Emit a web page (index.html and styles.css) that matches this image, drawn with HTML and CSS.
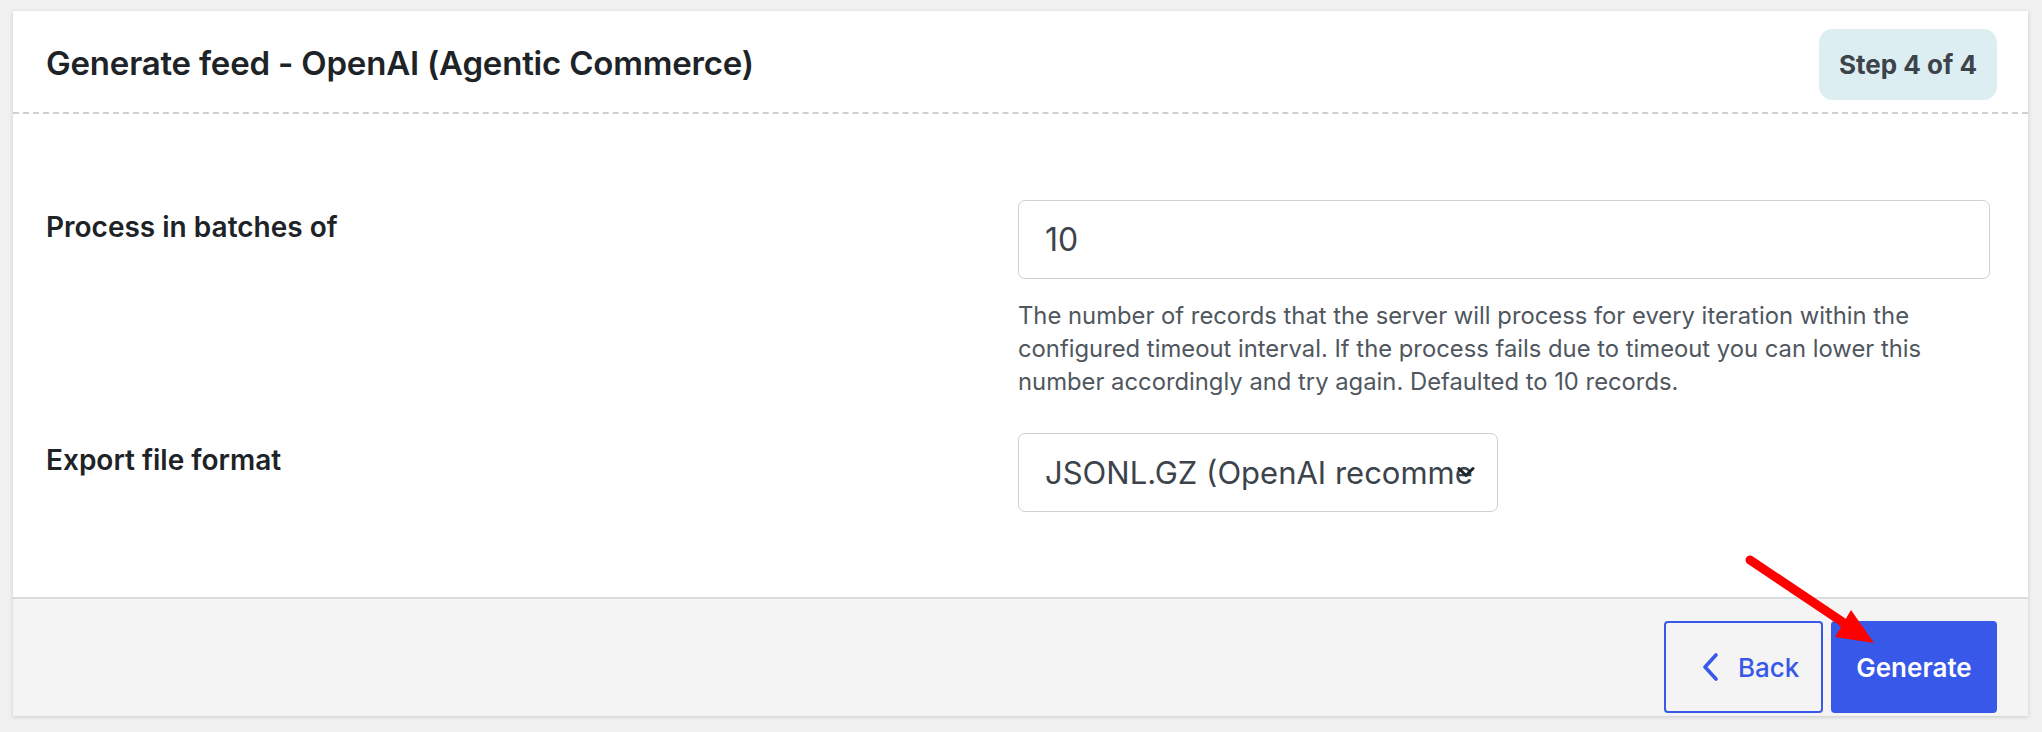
FILE: index.html
```html
<!DOCTYPE html>
<html lang="en">
<head>
<meta charset="utf-8">
<title>Generate feed - OpenAI (Agentic Commerce)</title>
<link rel="stylesheet" href="styles.css">
</head>
<body>
<div class="card">
  <div class="card-header">
    <h2 class="title">Generate feed - OpenAI (Agentic Commerce)</h2>
    <span class="badge">Step 4 of 4</span>
  </div>
  <div class="card-body">
    <div class="row">
      <div class="label">Process in batches of</div>
      <div class="control">
        <div class="input">10</div>
        <p class="help">The number of records that the server will process for every iteration within the configured timeout interval. If the process fails due to timeout you can lower this number accordingly and try again. Defaulted to 10 records.</p>
      </div>
    </div>
    <div class="row row-second">
      <div class="label">Export file format</div>
      <div class="control">
        <div class="select">
          <span class="select-text">JSONL.GZ (OpenAI recommended)</span>
          <svg class="select-arrow" width="18" height="12" viewBox="0 0 18 12"><path d="M2 2.5 L9 9.5 L16 2.5" fill="none" stroke="#1d2327" stroke-width="3" stroke-linecap="round" stroke-linejoin="round"/></svg>
        </div>
      </div>
    </div>
  </div>
  <div class="card-footer">
    <button class="btn btn-back">
      <svg class="chev" width="18" height="28" viewBox="0 0 18 28"><path d="M15 2 L4 14 L15 26" fill="none" stroke="#3858e9" stroke-width="3.6" stroke-linecap="round" stroke-linejoin="round"/></svg>
      <span>Back</span>
    </button>
    <button class="btn btn-primary">Generate</button>
  </div>
</div>
<svg class="annot-arrow" width="140" height="100" viewBox="0 0 140 100">
  <line x1="10" y1="10" x2="104" y2="73" stroke="#ff0000" stroke-width="9" stroke-linecap="round"/>
  <polygon points="111,60 95,87 134,93" fill="#ff0000"/>
</svg>
</body>
</html>
```
FILE: styles.css
```css
* { box-sizing: border-box; }
html, body { margin: 0; padding: 0; }
body {
  background: #f0f0f1;
  font-family: Inter, "Noto Sans", "Liberation Sans", sans-serif;
  color: #1d2327;
  width: 2042px;
  height: 732px;
  position: relative;
  overflow: hidden;
}
.card {
  margin: 11px 14px 0 13px;
  background: #fff;
  box-shadow: 0 1px 4px rgba(0,0,0,0.16);
}
.card-header {
  display: flex;
  justify-content: space-between;
  align-items: center;
  padding: 18px 31px 12px 33px;
  border-bottom: 2px dashed #cfcfcf;
}
.title {
  margin: 0 0 4px;
  font-size: 33px;
  font-weight: 600;
  color: #1d2327;
  letter-spacing: -0.2px;
}
.badge {
  display: inline-flex;
  align-items: center;
  height: 71px;
  padding: 0 20px;
  background: #ddeef2;
  border-radius: 14px;
  font-size: 26px;
  font-weight: 700;
  color: #3c434a;
}
.card-body {
  padding: 86px 38px 85px 33px;
}
.row {
  display: grid;
  grid-template-columns: 972px 1fr;
}
.row-second { margin-top: 35px; }
.label {
  font-size: 28px;
  font-weight: 600;
  color: #1d2327;
  line-height: 38px;
  padding-top: 8px;
}
.input {
  height: 79px;
  border: 1px solid #cdd0d5;
  border-radius: 7px;
  padding: 0 26px;
  display: flex;
  align-items: center;
  font-size: 32px;
  color: #3c434a;
}
.help {
  margin: 20px 0 0;
  font-size: 23.8px;
  line-height: 33px;
  color: #50575e;
}
.select {
  position: relative;
  width: 480px;
  height: 79px;
  border: 1px solid #cdd0d5;
  border-radius: 7px;
  padding: 0 23px 0 26px;
  display: flex;
  align-items: center;
  overflow: hidden;
}
.select-text {
  white-space: nowrap;
  overflow: hidden;
  font-size: 31px;
  color: #3c434a;
}
.select-arrow {
  position: absolute;
  right: 22px;
  top: 32px;
}
.card-footer {
  display: flex;
  justify-content: flex-end;
  gap: 8px;
  padding: 22px 31px 3px;
  background: #f4f4f4;
  border-top: 2px solid #dcdcde;
}
.btn {
  height: 92px;
  border-radius: 4px;
  font-family: inherit;
  font-size: 26px;
  display: inline-flex;
  align-items: center;
  cursor: pointer;
}
.btn-back {
  width: 159px;
  padding: 0 0 0 35px;
  gap: 19px;
  background: transparent;
  border: 2px solid #3858e9;
  color: #3858e9;
  font-weight: 500;
}
.btn-primary {
  width: 166px;
  justify-content: center;
  background: #3858e9;
  border: 2px solid #3858e9;
  color: #fff;
  font-weight: 600;
}
.annot-arrow {
  position: absolute;
  left: 1740px;
  top: 550px;
  pointer-events: none;
}
```
